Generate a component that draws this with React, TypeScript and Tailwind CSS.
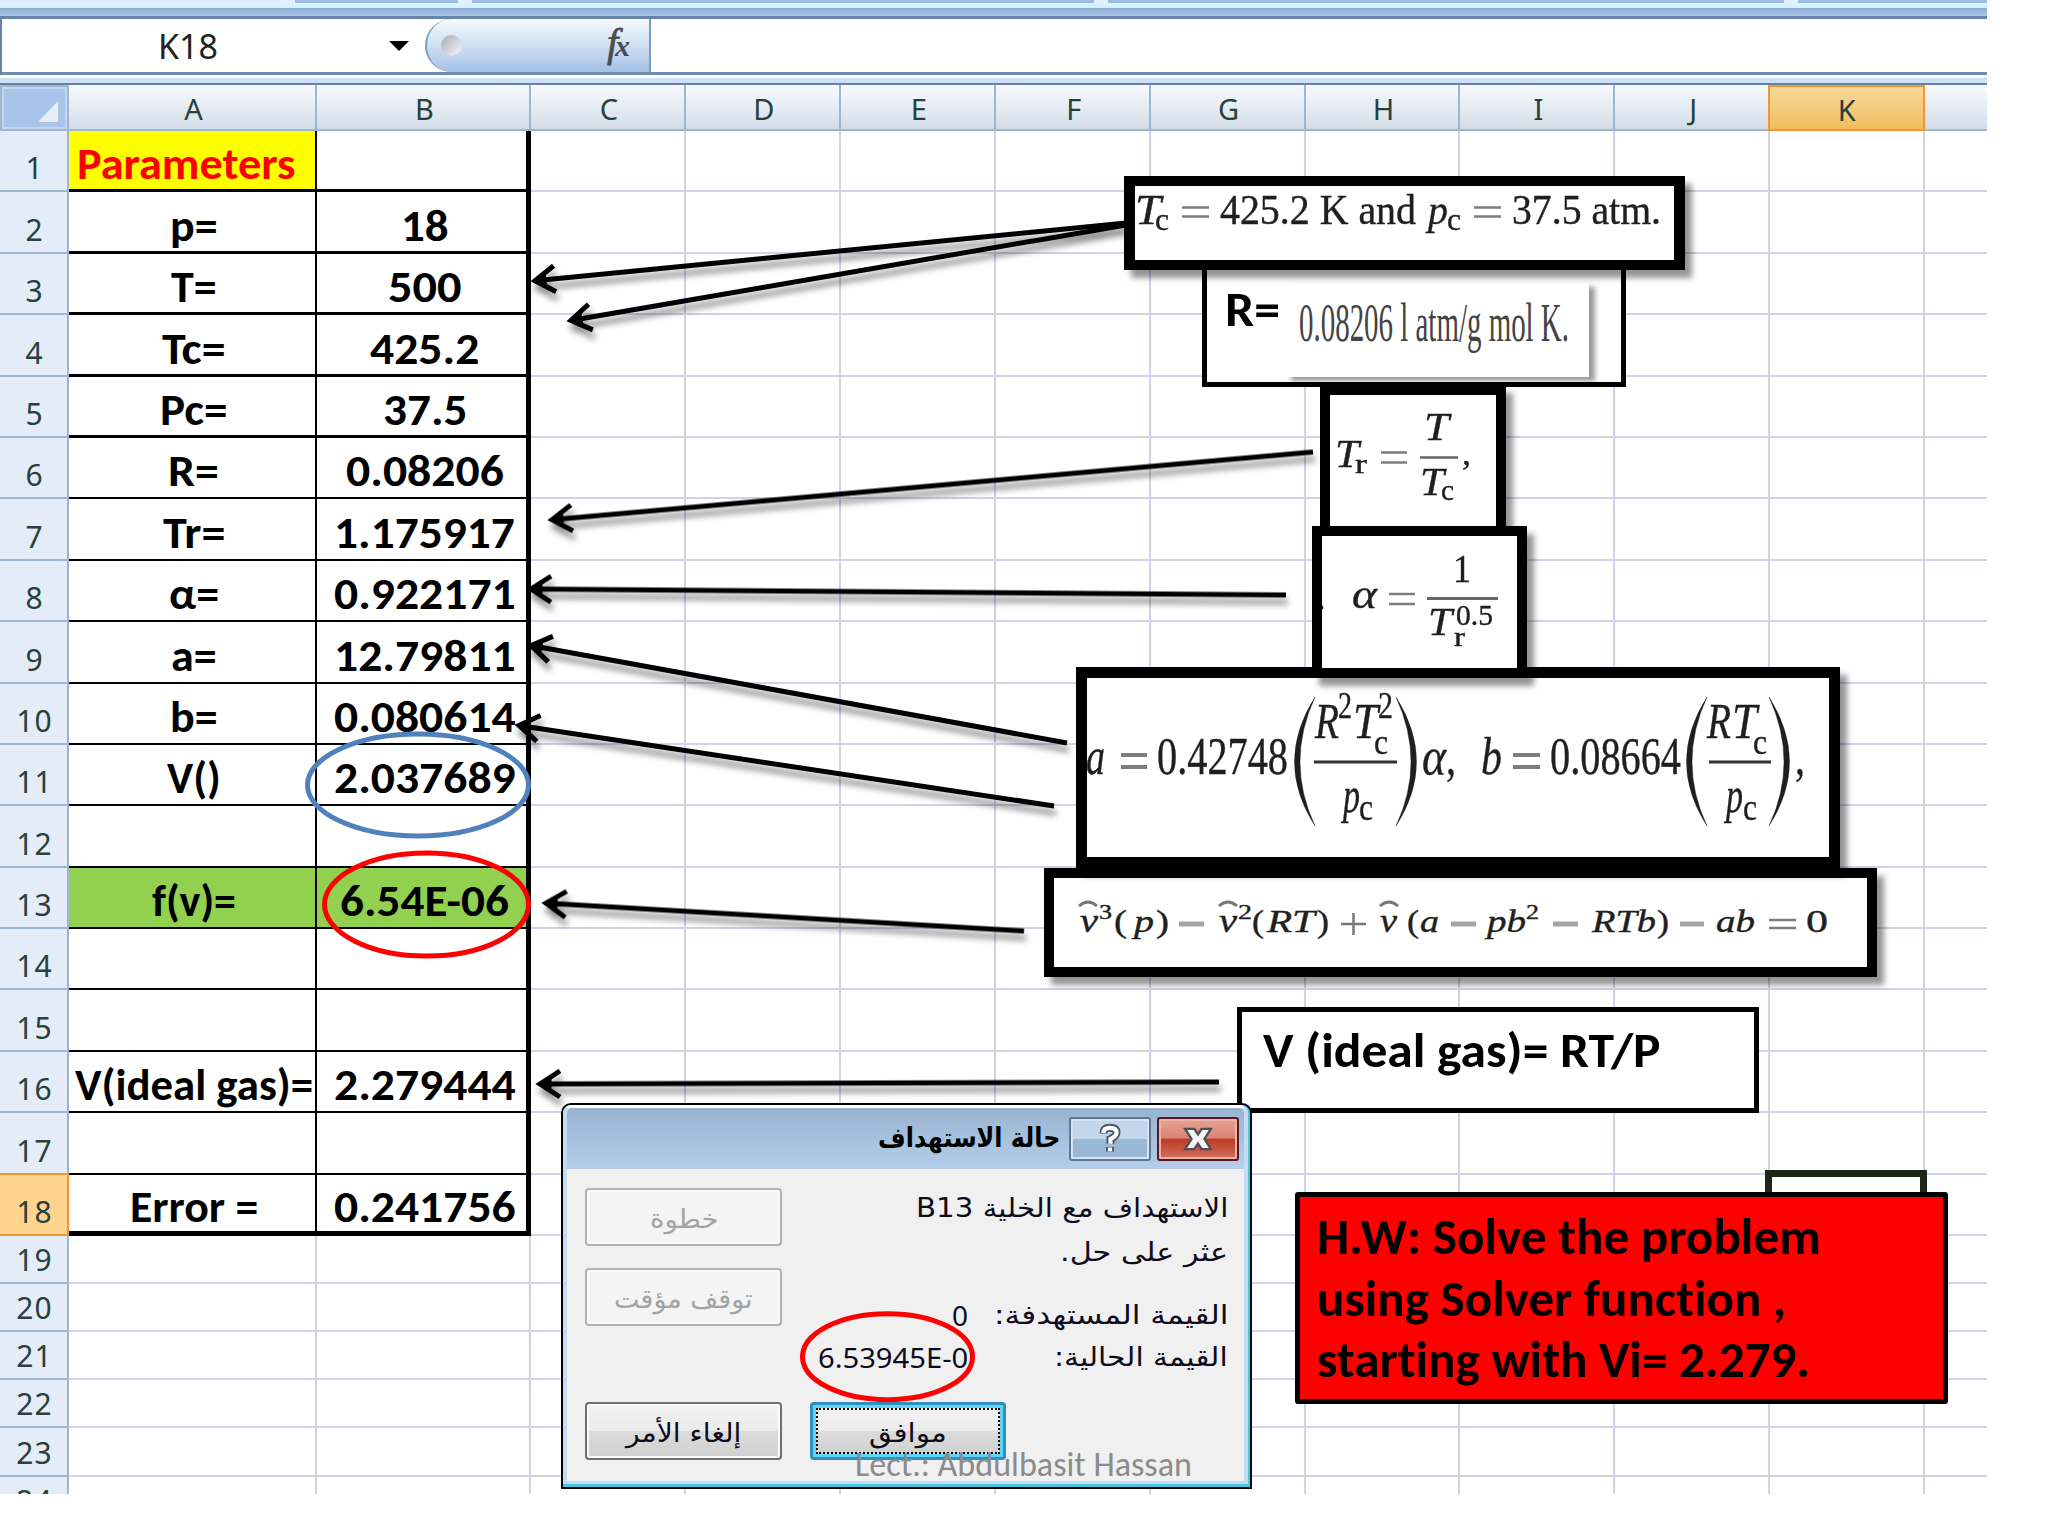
import { useLayoutEffect, useRef, useState, type ReactNode } from "react";

const CALIBRI = "font-['Carlito','Lato',sans-serif] [font-variant-ligatures:none]";
const NOTO = "font-['Noto_Sans',sans-serif]";
const ARABIC = "font-['DejaVu_Sans',sans-serif]";

/* Stretches its text horizontally to a fixed width. */
function Fit({ w, className = "", children }: { w: number; className?: string; children: ReactNode }) {
  const ref = useRef<HTMLSpanElement>(null);
  const [scale, setScale] = useState(1);
  useLayoutEffect(() => {
    if (ref.current) setScale(w / ref.current.offsetWidth);
  }, [w]);
  return (
    <span className={`flex justify-start ${className}`} dir="ltr" style={{ width: w }}>
      <span ref={ref} dir="auto" className="block shrink-0 origin-left whitespace-nowrap" style={{ transform: `scaleX(${scale})` }}>
        {children}
      </span>
    </span>
  );
}

type Row = { n: number; a?: string; aw?: number; b?: string; bw?: number };

const rows: Row[] = [
  { n: 1, a: "Parameters", aw: 219 },
  { n: 2, a: "p=", aw: 48, b: "18", bw: 48 },
  { n: 3, a: "T=", aw: 46, b: "500", bw: 73 },
  { n: 4, a: "Tc=", aw: 64, b: "425.2", bw: 109 },
  { n: 5, a: "Pc=", aw: 67, b: "37.5", bw: 84 },
  { n: 6, a: "R=", aw: 51, b: "0.08206", bw: 158 },
  { n: 7, a: "Tr=", aw: 62, b: "1.175917", bw: 181 },
  { n: 8, a: "α=", aw: 50, b: "0.922171", bw: 182 },
  { n: 9, a: "a=", aw: 46, b: "12.79811", bw: 182 },
  { n: 10, a: "b=", aw: 48, b: "0.080614", bw: 182 },
  { n: 11, a: "V()", aw: 54, b: "2.037689", bw: 182 },
  { n: 12 },
  { n: 13, a: "f(v)=", aw: 84, b: "6.54E-06", bw: 169 },
  { n: 14 },
  { n: 15 },
  { n: 16, a: "V(ideal gas)=", aw: 238, b: "2.279444", bw: 182 },
  { n: 17 },
  { n: 18, a: "Error =", aw: 128, b: "0.241756", bw: 182 },
  { n: 19 },
  { n: 20 },
  { n: 21 },
  { n: 22 },
  { n: 23 },
  { n: 24 },
];

const columns = ["C", "D", "E", "F", "G", "H", "I", "J", "K", ""];
const GRID =
  "grid grid-cols-[69px_248px_214px_155px_154.9px_154.9px_154.9px_154.9px_154.9px_154.9px_154.9px_154.9px_154.9px]";

function ColumnHead({ label, active }: { label: string; active?: boolean }) {
  return (
    <div
      className={
        active
          ? "-ml-[2px] flex items-center justify-center border-2 border-[#f29536] bg-linear-to-b from-[#f8d89a] to-[#f1be5c] pt-0.5"
          : "flex items-center justify-center border-r-2 border-b-2 border-[#9eb6ce] bg-linear-to-b from-[#f8fbff] to-[#d3dde7] pt-0.5 pl-[3px]"
      }
    >
      <span className={`${NOTO} text-[29px] leading-none text-[#27413e]`}>{label}</span>
    </div>
  );
}

function SheetRow({ row }: { row: Row }) {
  const table = row.n <= 18;
  const last = row.n === 18;
  const fill = row.n === 13 ? "bg-[#92d050]" : "";
  const edge = !table
    ? "border-b-2 border-r-2 border-[#d0d2e6]"
    : last
      ? "border-b-[5px] border-black"
      : row.n <= 5
        ? "border-b-[3px] border-black"
        : "border-b-2 border-black";
  const lift = last ? "pb-px" : row.n <= 5 ? "pb-[2px]" : "pb-[3px]";
  return (
    <div className={`${GRID} shrink-0 ${table ? "h-[61.4px]" : "h-[48.1px]"}`}>
      <div
        className={`flex items-end justify-center border-r-2 border-b-2 pb-[2px] pl-0.5 ${
          last ? "border-[#f29536] bg-[#ffd58d] shadow-[0_-2px_0_#f29536]" : "border-[#9db7d3] bg-[#e4ecf7]"
        }`}
      >
        <span className={`${NOTO} text-[30px] leading-[41px] tracking-[1px] text-[#27413e]`}>{row.n}</span>
      </div>
      <div
        className={`flex items-end justify-center ${edge} ${table ? "border-r-2" : ""} ${
          row.n === 1 ? "bg-[#ffff00] pr-3 text-[#ff0000]" : `${fill} pl-[3px] text-black`
        }`}
      >
        {row.a && (
          <Fit w={row.aw!} className={`${CALIBRI} ${lift} text-[45px] leading-[47px] font-bold`}>
            {row.a}
          </Fit>
        )}
      </div>
      <div className={`flex items-end justify-center ${edge} ${table ? "border-r-[5px] pl-1.5" : ""} ${fill} text-black`}>
        {row.b && (
          <Fit w={row.bw!} className={`${CALIBRI} ${lift} text-[45px] leading-[47px] font-bold`}>
            {row.b}
          </Fit>
        )}
      </div>
      {columns.map((c) => (
        <div key={c} className="border-r-2 border-b-2 border-[#d0d2e6]" />
      ))}
    </div>
  );
}

/* Serif run inside a formula, set to an exact width. */
function M({ x, y, w, s, up, children }: { x: number; y: number; w: number; s: number; up?: boolean; children: string }) {
  return (
    <text x={x} y={y} fontSize={s} textLength={w} lengthAdjust="spacingAndGlyphs" fontStyle={up ? "normal" : "italic"}>
      {children}
    </text>
  );
}

function Equals({ x, y, w, gap = 12, t = 2.5 }: { x: number; y: number; w: number; gap?: number; t?: number }) {
  return (
    <path d={`M${x} ${y - gap / 2}h${w}M${x} ${y + gap / 2}h${w}`} stroke="#7d7d7d" strokeWidth={t} fill="none" />
  );
}

function Minus({ x, w }: { x: number; w: number }) {
  return <path d={`M${x} 924h${w}`} stroke="#a6a6a6" strokeWidth="5" />;
}

function Hat({ x }: { x: number }) {
  return <path d={`M${x} 906q9 -8 18 0`} stroke="#777" strokeWidth="3" fill="none" />;
}

const FORMULA = "block size-full fill-[#1f1f1f] stroke-[#1f1f1f] [stroke-width:0.4px] font-['Liberation_Serif',serif]";
const SHADOW = "shadow-[7px_8px_6px_rgba(0,0,0,0.42)]";

function Notes() {
  return (
    <>
      <div className={`absolute left-[1044px] top-[868px] h-[109px] w-[833px] border-x-[10px] border-y-[10px] border-black bg-white ${SHADOW}`}>
        <svg viewBox="1054 878 813 89" className={FORMULA}>
          <Hat x={1079} />
          <M x={1080} y={932} w={18} s={33}>v</M>
          <M x={1099} y={919} w={13} s={21} up>3</M>
          <M x={1114} y={932} w={13} s={31} up>(</M>
          <M x={1134} y={932} w={20} s={31}>p</M>
          <M x={1156} y={932} w={13} s={31} up>)</M>
          <Minus x={1179} w={25} />
          <Hat x={1219} />
          <M x={1219} y={932} w={18} s={33}>v</M>
          <M x={1238} y={919} w={14} s={21} up>2</M>
          <M x={1252} y={932} w={12} s={31} up>(</M>
          <M x={1267} y={932} w={48} s={31}>RT</M>
          <M x={1317} y={932} w={12} s={31} up>)</M>
          <path d="M1341 924h25M1353.500 913v22" stroke="#777" strokeWidth="2.500" />
          <Hat x={1380} />
          <M x={1380} y={932} w={17} s={33}>v</M>
          <M x={1407} y={932} w={12} s={31} up>(</M>
          <M x={1420} y={932} w={19} s={31}>a</M>
          <Minus x={1451} w={25} />
          <M x={1487} y={932} w={39} s={31}>pb</M>
          <M x={1526} y={919} w={13} s={21} up>2</M>
          <Minus x={1553} w={25} />
          <M x={1592} y={932} w={64} s={31}>RTb</M>
          <M x={1657} y={932} w={12} s={31} up>)</M>
          <Minus x={1680} w={24} />
          <M x={1716} y={932} w={39} s={31}>ab</M>
          <Equals x={1769} y={924} w={27} gap={8} />
          <M x={1806} y={932} w={22} s={31} up>0</M>
        </svg>
      </div>

      <div className={`absolute left-[1076px] top-[667px] h-[201px] w-[764px] border-x-[11px] border-y-[11px] border-black bg-white ${SHADOW}`}>
        <svg viewBox="1087 678 742 179" className={FORMULA}>
          <M x={1086} y={774} w={19} s={53}>a</M>
          <Equals x={1121} y={761} w={26} t={4} />
          <M x={1157} y={774} w={131} s={53} up>0.42748</M>
          <path d="M1315 697Q1274 762 1315 826Q1285 762 1315 697ZM1396 697Q1437 762 1396 826Q1426 762 1396 697Z" />
          <M x={1315} y={738} w={24} s={51}>R</M>
          <M x={1338} y={718} w={14} s={38} up>2</M>
          <M x={1353} y={738} w={25} s={51}>T</M>
          <M x={1378} y={718} w={15} s={38} up>2</M>
          <M x={1374} y={754} w={14} s={35} up>c</M>
          <path d="M1314 762h83M1709 762h62" stroke="#333" strokeWidth="3" />
          <M x={1343} y={812} w={17} s={51}>p</M>
          <M x={1359} y={820} w={14} s={38} up>c</M>
          <M x={1422} y={774} w={24} s={53}>α</M>
          <M x={1446} y={774} w={10} s={50} up>,</M>
          <M x={1481} y={774} w={21} s={53}>b</M>
          <Equals x={1513} y={761} w={27} t={4} />
          <M x={1550} y={774} w={131} s={53} up>0.08664</M>
          <path d="M1707 697Q1666 762 1707 826Q1677 762 1707 697ZM1769 697Q1810 762 1769 826Q1799 762 1769 697Z" />
          <M x={1707} y={738} w={24} s={51}>R</M>
          <M x={1732} y={738} w={25} s={51}>T</M>
          <M x={1753} y={754} w={14} s={35} up>c</M>
          <M x={1726} y={812} w={17} s={51}>p</M>
          <M x={1743} y={820} w={14} s={38} up>c</M>
          <M x={1795} y={774} w={10} s={50} up>,</M>
        </svg>
      </div>

      <div className={`absolute left-[1320px] top-[385px] h-[151px] w-[186px] border-[10px] border-black bg-white ${SHADOW}`}>
        <svg viewBox="1330 395 166 131" className={FORMULA}>
          <M x={1335} y={467} w={24} s={40}>T</M>
          <M x={1355} y={473} w={12} s={27} up>r</M>
          <Equals x={1381} y={457.5} w={26} gap={10} />
          <M x={1424} y={440} w={25} s={40}>T</M>
          <path d="M1420 457.500h38" stroke="#666" strokeWidth="2.500" />
          <M x={1420} y={495} w={24} s={40}>T</M>
          <M x={1441} y={500} w={13} s={29} up>c</M>
          <M x={1462} y={465} w={9} s={34} up>,</M>
        </svg>
      </div>

      <div className={`absolute left-[1312px] top-[526px] h-[152px] w-[215px] border-[10px] border-black bg-white ${SHADOW}`}>
        <svg viewBox="1322 536 195 132" className={FORMULA}>
          <path d="M1322 606h1v3h-1z" />
          <M x={1352} y={608} w={25} s={40}>α</M>
          <Equals x={1389} y={599} w={26} gap={10} />
          <M x={1453} y={582} w={18} s={39} up>1</M>
          <path d="M1427 598.500h71" stroke="#666" strokeWidth="3" />
          <M x={1428} y={635} w={24} s={40}>T</M>
          <M x={1456} y={625} w={37} s={29} up>0.5</M>
          <M x={1454} y={646} w={11} s={28} up>r</M>
        </svg>
      </div>

      <div className="absolute left-[1202px] top-[262px] h-[125px] w-[424px] border-[5px] border-black bg-white">
        <div className="flex h-full">
          <div className="w-[78px] pl-[18px] pt-[17px]">
            <Fit w={55} className={`${CALIBRI} text-[48px] leading-[52px] font-bold text-black`}>R=</Fit>
          </div>
          <div className="mt-4 h-[94px] w-[304px] bg-white shadow-[6px_4px_5px_rgba(0,0,0,0.4)]">
            <svg viewBox="1285 283 304 94" className="block size-full fill-[#444] font-['Liberation_Serif',serif]">
              <M x={1299} y={341} w={270} s={55} up>0.08206 l atm/g mol K.</M>
            </svg>
          </div>
        </div>
      </div>

      <div className={`absolute left-[1124px] top-[176px] h-[94px] w-[561px] border-x-[11px] border-y-[10px] border-black bg-white ${SHADOW}`}>
        <svg viewBox="1135 186 539 74" className={FORMULA}>
          <M x={1135} y={223.5} w={26} s={42}>T</M>
          <M x={1155} y={230} w={14} s={31} up>c</M>
          <Equals x={1182} y={212} w={27} gap={9} />
          <M x={1220} y={223.5} w={196} s={42} up>425.2 K and</M>
          <M x={1428} y={223.5} w={20} s={42}>p</M>
          <M x={1447} y={230} w={14} s={31} up>c</M>
          <Equals x={1474} y={212} w={27} gap={9} />
          <M x={1512} y={223.5} w={149} s={42} up>37.5 atm.</M>
        </svg>
      </div>

      <div className="absolute left-[1237px] top-[1007px] h-[106px] w-[522px] border-[5px] border-black bg-white pl-[21px] pt-[13px]">
        <Fit w={397} className={`${CALIBRI} text-[48px] leading-[52px] font-bold text-black`}>V (ideal gas)= RT/P</Fit>
      </div>

      <div className="absolute left-[1765px] top-[1170px] h-[60px] w-[162px] border-[7px] border-[#1f2517] bg-white" />

      <div className="absolute left-[1295px] top-[1192px] flex h-[212px] w-[653px] flex-col rounded-[3px] border-[5px] border-black bg-[#ff0000] pl-[17px] pt-[9px]">
        <Fit w={504} className={`${CALIBRI} text-[50px] leading-[61.500px] font-bold text-black`}>H.W: Solve the problem</Fit>
        <Fit w={469} className={`${CALIBRI} text-[50px] leading-[61.500px] font-bold text-black`}>using Solver function ,</Fit>
        <Fit w={493} className={`${CALIBRI} text-[50px] leading-[61.500px] font-bold text-black`}>starting with Vi= 2.279.</Fit>
      </div>
    </>
  );
}

const arrows = [
  [1126, 223, 532, 281],
  [1126, 225, 568, 321],
  [1313, 452, 549, 520],
  [1286, 595, 528, 589],
  [1067, 743, 528, 645],
  [1054, 806, 516, 725],
  [1024, 931, 543, 903],
  [1219, 1082, 537, 1084],
];

function Arrows() {
  return (
    <svg viewBox="0 0 1987 1494" className="pointer-events-none absolute left-0 top-0 h-[1494px] w-[1987px]" fill="none">
      <g stroke="black" strokeWidth="5" className="[filter:drop-shadow(2px_7px_3px_rgba(0,0,0,0.45))]">
        {arrows.map(([x1, y1, x2, y2]) => {
          const len = Math.hypot(x1 - x2, y1 - y2);
          const angle = (Math.atan2(y1 - y2, x1 - x2) * 180) / Math.PI;
          return (
            <g key={`${x2}-${y2}`} transform={`translate(${x2} ${y2}) rotate(${angle})`}>
              <path d={`M3 0H${len}`} />
              <path d="M23 -13L3 0L23 13" />
              <path d="M3 0L14 -6V6Z" fill="black" strokeWidth="1" />
            </g>
          );
        })}
      </g>
      <ellipse cx="418" cy="785" rx="110.500" ry="51" stroke="#4f81bd" strokeWidth="5" />
      <ellipse cx="426.500" cy="904.500" rx="102" ry="51.500" stroke="#ff0000" strokeWidth="5" />
    </svg>
  );
}

function Dialog() {
  const label = `${ARABIC} text-[26px] leading-[36px] text-[#0c0c1c]`;
  const off = `${ARABIC} text-[26px] leading-[36px] text-[#a3a3a3]`;
  return (
    <div className="absolute left-[561px] top-[1103px] flex h-[386px] w-[691px] flex-col rounded-t-[10px] border-2 border-black bg-[#45c8e4]">
      <div className="mr-[2px] mb-[3px] flex flex-1 flex-col overflow-hidden rounded-t-[8px] border-x-[4px] border-t-[3px] border-b-[3px] border-[#c4dcf3] border-t-white bg-[#f0f0f0]">
        <div className="flex h-[61px] shrink-0 items-start justify-end bg-linear-to-b from-[#98b3d0] to-[#b5cfea] pr-[5px] pt-[9px]">
          <div className="mr-[9px] pt-[2px]">
            <Fit w={182} className={`${ARABIC} text-[27px] leading-[38px] font-bold text-black`}>حالة الاستهداف</Fit>
          </div>
          <div className="mr-[6px] flex h-[44px] w-[82px] items-center justify-center rounded-[3px] border-2 border-[#5f7896] bg-linear-to-b from-[#c3d6ec] from-50% to-[#9bb7d6] to-50% shadow-[inset_0_0_0_2px_#d5e4f4]">
            <svg viewBox="0 0 30 34" className="h-[32px] w-[28px]">
              <path d="M8 11Q8 5 15 5Q22 5 22 10Q22 14 15.500 17V22M15 25.500V30.500" fill="none" stroke="#4b5664" strokeWidth="8.500" />
              <path d="M8 10.500Q8 5 15 5Q22 5 22 10Q22 14 15.500 17V22M15 26V30" fill="none" stroke="white" strokeWidth="4.500" />
            </svg>
          </div>
          <div className="flex h-[44px] w-[82px] items-center justify-center rounded-[3px] border-2 border-[#5d1620] bg-[linear-gradient(#e8a193_0%,#d98473_48%,#bb3a25_50%,#d2705c_100%)] shadow-[inset_0_0_0_2px_#eab4a9]">
            <svg viewBox="0 0 32 26" className="h-[24px] w-[30px]">
              <path d="M2 2H12L16 8L20 2H30L23 13L30 24H20L16 18L12 24H2L9 13Z" fill="#f6f6f6" stroke="#4f4b57" strokeWidth="2.500" />
            </svg>
          </div>
        </div>
        <div className="flex flex-1 justify-between pl-[18px] pr-[16px] pt-[19px]">
          <div className="flex w-[197px] flex-col">
            <div className="flex h-[58px] items-center justify-center rounded-[4px] border-2 border-[#adb2b5] bg-[#f4f4f4] pt-1 shadow-[inset_0_0_0_2px_#fbfbfb]">
              <Fit w={68} className={off}>خطوة</Fit>
            </div>
            <div className="mt-[22px] flex h-[58px] items-center justify-center rounded-[4px] border-2 border-[#adb2b5] bg-[#f4f4f4] pt-1 shadow-[inset_0_0_0_2px_#fbfbfb]">
              <Fit w={139} className={off}>توقف مؤقت</Fit>
            </div>
            <div className="mt-[76px] flex h-[58px] items-center justify-center rounded-[4px] border-2 border-[#6f6f6f] bg-[linear-gradient(#f3f3f3_0%,#ebebeb_50%,#dcdcdc_51%,#cfcfcf_100%)] pt-1 shadow-[inset_0_0_0_2px_#fafafa]">
              <Fit w={115} className={label}>إلغاء الأمر</Fit>
            </div>
          </div>
          <div className="flex w-[418px] flex-col">
            <div className="flex justify-end pt-[2px]">
              <Fit w={312} className={label}>الاستهداف مع الخلية B13</Fit>
            </div>
            <div className="mt-[8px] flex justify-end">
              <Fit w={168} className={label}>عثر على حل.</Fit>
            </div>
            <div className="mt-[27px] flex justify-end">
              <span className={`${NOTO} mr-[26px] text-[28px] leading-[36px] text-[#0c0c1c]`}>0</span>
              <Fit w={234} className={label}>القيمة المستهدفة:</Fit>
            </div>
            <div className="mt-[6px] flex justify-between pl-[8px]">
              <Fit w={150} className={`${NOTO} text-[28px] leading-[36px] text-[#0c0c1c]`}>6.53945E-0</Fit>
              <Fit w={174} className={label}>القيمة الحالية:</Fit>
            </div>
            <div className="mt-[27px] flex h-[58px] w-[196px] rounded-[4px] border-[3px] border-[#2f8fc0] bg-[linear-gradient(#f3f3f3_0%,#ebebeb_50%,#dcdcdc_51%,#cfcfcf_100%)] p-[3px] shadow-[inset_0_0_0_3px_#5fd5f2]">
              <div className="flex flex-1 items-center justify-center border-2 border-dotted border-black pt-1">
                <Fit w={78} className={label}>موافق</Fit>
              </div>
            </div>
          </div>
        </div>
      </div>
      <svg viewBox="797 1308 182 98" className="absolute left-[234px] top-[203px] h-[98px] w-[182px]">
        <ellipse cx="887.500" cy="1356.700" rx="85" ry="43" fill="none" stroke="#ff0000" strokeWidth="5" />
      </svg>
      <div className="absolute left-[292px] top-[342px]">
        <Fit w={337} className={`${CALIBRI} text-[34px] leading-[36px] text-[#8b8b8b]`}>Lect.: Abdulbasit Hassan</Fit>
      </div>
    </div>
  );
}

export default function App() {
  return (
    <div className="h-[1536px] w-[2048px] overflow-hidden bg-white">
      <div className="relative flex h-[1494px] w-[1987px] flex-col overflow-hidden bg-white">
        <div className="flex h-[3px] shrink-0 gap-[14px] bg-[#e4f2ff]">
          <div className="w-[281px] bg-[#dfecfb]" />
          <div className="w-[163px] bg-[#9bbcdf]" />
          <div className="w-[622px] bg-[#9bbcdf]" />
          <div className="w-[676px] bg-[#9bbcdf]" />
          <div className="flex-1 bg-[#9bbcdf]" />
        </div>
        <div className="h-[5px] shrink-0 bg-linear-to-b from-[#dff0ff] to-[#c4f6ff]" />
        <div className="h-[8px] shrink-0 bg-linear-to-b from-[#8fabcf] to-[#abc5ea]" />
        <div className="flex h-[59px] shrink-0 border-y-[3px] border-l-2 border-[#6585a8] border-b-[#6f8fae] bg-white">
          <div className="flex w-[423px] items-center bg-white pl-[156px]">
            <Fit w={60} className={`${NOTO} text-[34px] leading-[50px] text-[#222]`}>K18</Fit>
            <svg viewBox="0 0 20 10" className="ml-[171px] h-[10px] w-[20px]">
              <path d="M0 0H20L10 10Z" />
            </svg>
          </div>
          <div className="flex w-[226px] items-center justify-between rounded-l-[27px] border-r-2 border-l-2 border-[#7a9cc2] bg-linear-to-b from-[#f7faff] via-[#cfdff2] to-[#a4c0e6] pl-[14px] pr-[17px]">
            <div className="size-[21px] rounded-full bg-linear-to-br from-[#a9adb5] to-[#f5f7fa]" />
            <span className="pb-1.5 pr-0.5 font-['Liberation_Serif',serif] text-[40px] leading-none text-[#4a4d52] italic [-webkit-text-stroke:0.8px_#4a4d52]">
              <span className="mr-1">f</span>
              <span className="-ml-[7px] text-[30px] font-bold [-webkit-text-stroke:0px]">x</span>
            </span>
          </div>
          <div className="flex-1 bg-white" />
        </div>
        <div className="h-[3px] shrink-0 bg-white" />
        <div className="h-[5px] shrink-0 bg-[#cfe1f5]" />
        <div className="h-[2px] shrink-0 bg-[#6482a5]" />
        <div className={`${GRID} h-[46px] shrink-0`}>
          <div className="flex items-end justify-end border-2 border-[#9eb6ce] bg-[#a9c4e9] pr-[9px] pb-[7px] shadow-[inset_0_0_0_2px_#c3d7f2]">
            <svg viewBox="0 0 20 21" className="h-[21px] w-[20px]">
              <path d="M20 0V21H0Z" fill="#e6edf6" />
            </svg>
          </div>
          <ColumnHead label="A" />
          <ColumnHead label="B" />
          {columns.map((c) => (
            <ColumnHead key={c} label={c} active={c === "K"} />
          ))}
        </div>
        {rows.map((r) => (
          <SheetRow key={r.n} row={r} />
        ))}
        <Arrows />
        <Notes />
        <Dialog />
      </div>
    </div>
  );
}
